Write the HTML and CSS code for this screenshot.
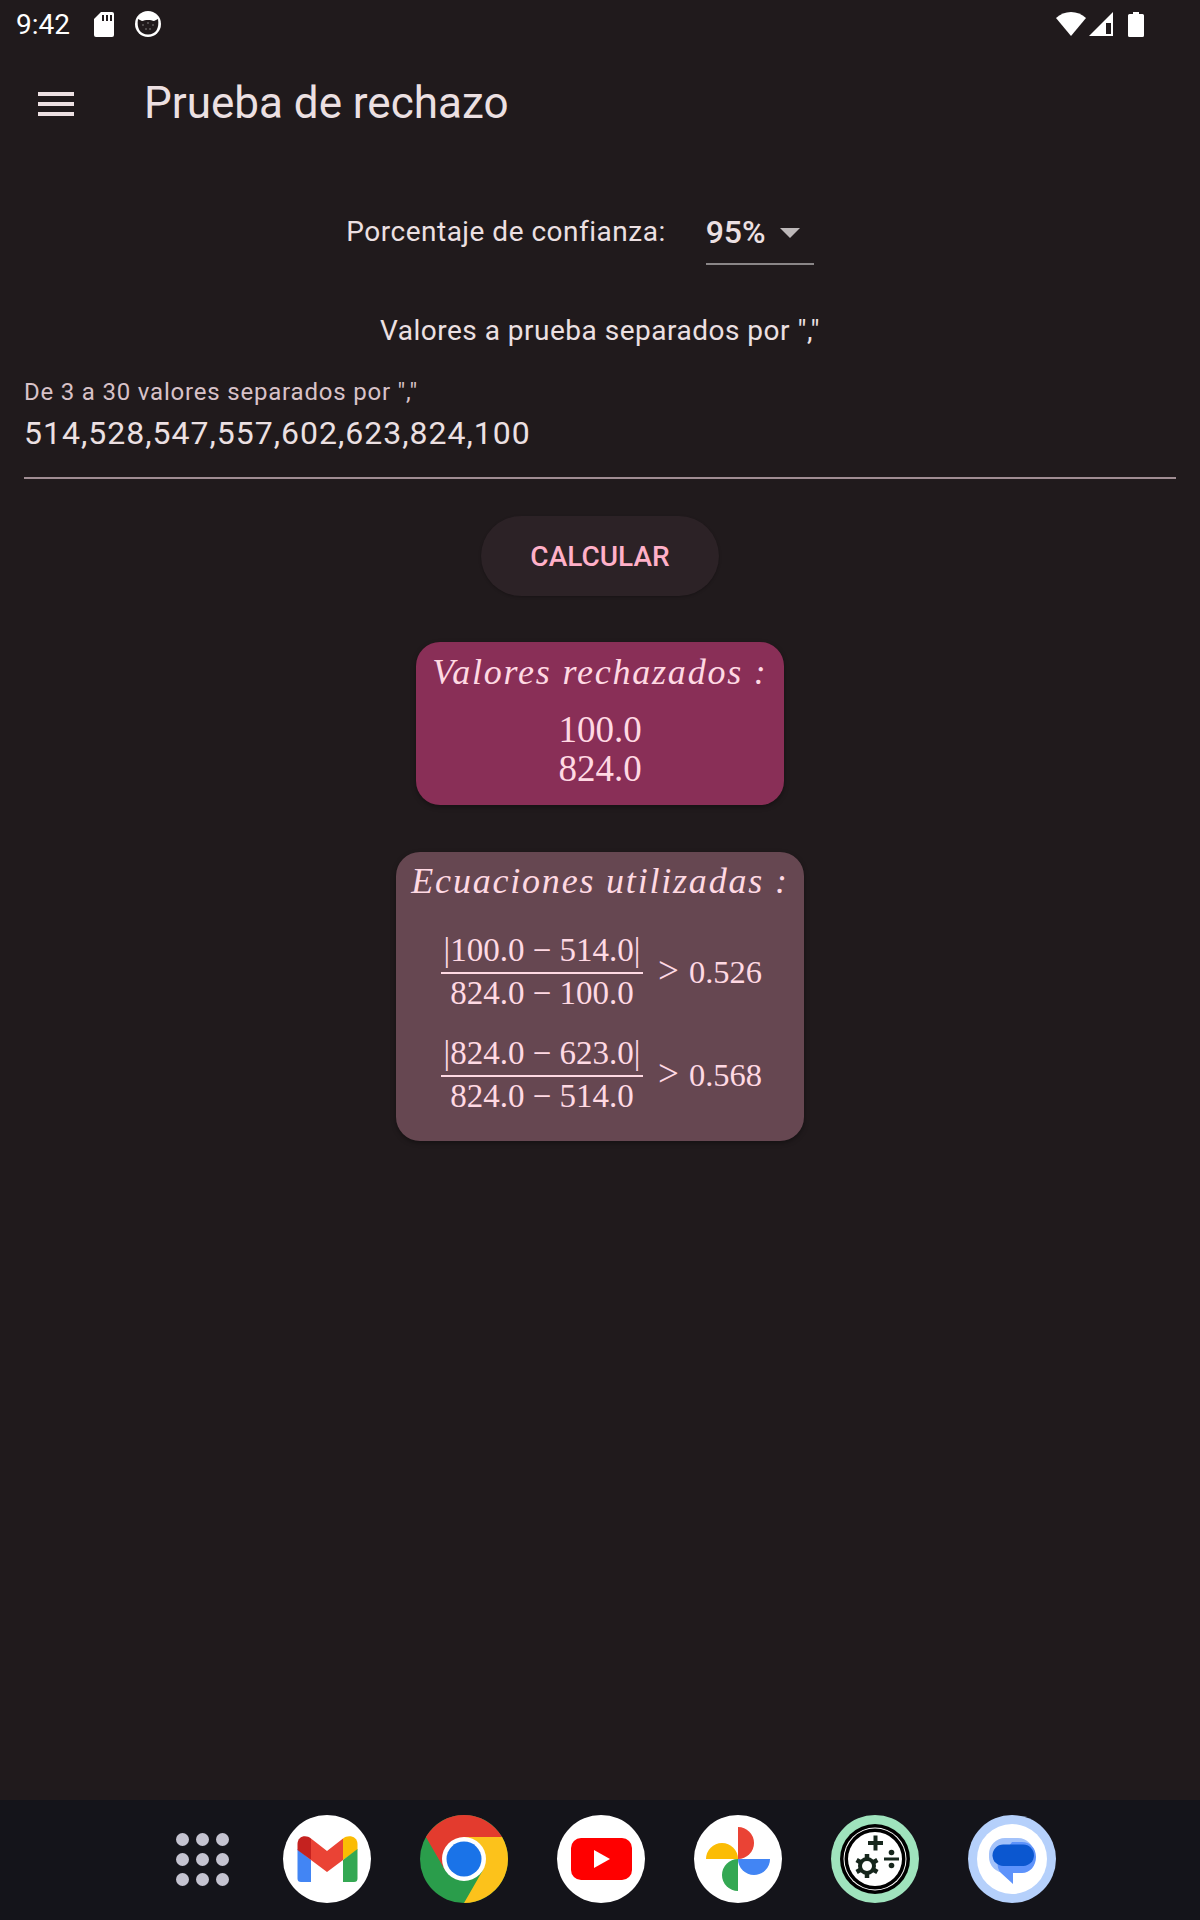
FILE: index.html
```html
<!DOCTYPE html>
<html lang="es">
<head>
  <meta charset="UTF-8" />
  <title>Prueba de rechazo</title>
  <link rel="stylesheet" href="styles.css">
</head>
<body>

  <div class="status-bar">
    <span class="clock">9:42</span>
    <svg class="sd-icon" viewBox="0 0 20 25">
      <path d="M7 0H18a2 2 0 0 1 2 2V23a2 2 0 0 1-2 2H2a2 2 0 0 1-2-2V7z" fill="#fff"/>
      <path d="M8 3h2v6H8zM12 3h2v6h-2zM16 3h2v6h-2z" fill="#201a1c"/>
    </svg>
    <svg class="cat-icon" viewBox="0 0 26 26">
      <circle cx="13" cy="13" r="13" fill="#fff"/>
      <path d="M3 8L7 10C10 8.500 16 8.500 19 10L23 8C24.500 17 21 23.500 13 23.500C5 23.500 1.500 17 3 8z" fill="#201a1c"/>
      <circle cx="8" cy="14" r="0.800" fill="#8a8a8a"/>
      <circle cx="18" cy="14" r="0.800" fill="#8a8a8a"/>
      <circle cx="13" cy="12" r="0.800" fill="#8a8a8a"/>
      <circle cx="11" cy="18" r="0.800" fill="#8a8a8a"/>
      <circle cx="15" cy="18" r="0.800" fill="#8a8a8a"/>
    </svg>
    <div class="status-right">
      <svg class="wifi-icon" viewBox="0 0 30 24">
        <path d="M0 6C8-2 22-2 30 6L15 24z" fill="#fff"/>
      </svg>
      <svg class="signal-icon" viewBox="0 0 24 24">
        <path d="M0 24L24 0V24z" fill="#fff"/>
        <path d="M17 11h5v11h-5z" fill="#201a1c"/>
      </svg>
      <svg class="battery-icon" viewBox="0 0 16 25">
        <path d="M5 0h6v2h3.500a1.500 1.500 0 0 1 1.500 1.500V23.500a1.500 1.500 0 0 1-1.500 1.500H1.500A1.500 1.500 0 0 1 0 23.500V3.500A1.500 1.500 0 0 1 1.500 2H5z" fill="#fff"/>
      </svg>
    </div>
  </div>

  <header class="app-bar">
    <div class="menu-icon">
      <span></span>
      <span></span>
      <span></span>
    </div>
    <h1>Prueba de rechazo</h1>
  </header>

  <main class="content">
    <div class="confidence-row">
      <span class="confidence-label">Porcentaje de confianza:</span>
      <div class="dropdown">
        <span>95%</span>
        <i class="dropdown-arrow"></i>
      </div>
    </div>

    <p class="values-title">Valores a prueba separados por ","</p>

    <div class="field">
      <label>De 3 a 30 valores separados por ","</label>
      <div class="field-value">514,528,547,557,602,623,824,100</div>
    </div>

    <button class="calc-button">CALCULAR</button>

    <section class="card card-rejected">
      <div class="math-title">Valores rechazados :</div>
      <div class="math-value first">100.0</div>
      <div class="math-value">824.0</div>
    </section>

    <section class="card card-equations">
      <div class="math-title">Ecuaciones utilizadas :</div>
      <div class="equation">
        <div class="fraction">
          <span class="numerator">|100.0 − 514.0|</span>
          <span class="denominator">824.0 − 100.0</span>
        </div>
        <span class="result"><span class="gt">&gt;</span>0.526</span>
      </div>
      <div class="equation">
        <div class="fraction">
          <span class="numerator">|824.0 − 623.0|</span>
          <span class="denominator">824.0 − 514.0</span>
        </div>
        <span class="result"><span class="gt">&gt;</span>0.568</span>
      </div>
    </section>
  </main>

  <footer class="dock">
    <div class="all-apps">
      <span></span><span></span><span></span>
      <span></span><span></span><span></span>
      <span></span><span></span><span></span>
    </div>

    <svg class="app-icon" viewBox="0 0 88 88">
      <circle cx="44" cy="44" r="44" fill="#fff"/>
      <path d="M14.500 34L28 45V67H18a3.500 3.500 0 0 1-3.500-3.500z" fill="#4285f4"/>
      <path d="M14.500 35V29C14.500 21 23 19 28 23.500V45z" fill="#c5221f"/>
      <path d="M28 23.500L44 36L60 23.500V45L44 57L28 45z" fill="#ea4335"/>
      <path d="M60 23.500C65 19 74.500 21 74.500 29V35L60 45z" fill="#fbbc04"/>
      <path d="M60 45L74.500 34V63.500A3.500 3.500 0 0 1 71 67H60z" fill="#34a853"/>
    </svg>

    <svg class="app-icon" viewBox="0 0 88 88">
      <circle cx="44" cy="44" r="44" fill="#2a9d4b"/>
      <path d="M5.900 22A44 44 0 0 1 82.100 22H44V44L25 55z" fill="#e33b2e"/>
      <path d="M82.100 22A44 44 0 0 1 44 88L63 55L44 44V22z" fill="#fcc21b"/>
      <circle cx="44" cy="44" r="22" fill="#fff"/>
      <circle cx="44" cy="44" r="17.500" fill="#1a73e8"/>
    </svg>

    <svg class="app-icon" viewBox="0 0 88 88">
      <circle cx="44" cy="44" r="44" fill="#fff"/>
      <rect x="14" y="23" width="61" height="42" rx="10" fill="#f00"/>
      <path d="M37 35L53 44L37 53z" fill="#fff"/>
    </svg>

    <svg class="app-icon" viewBox="0 0 88 88">
      <circle cx="44" cy="44" r="44" fill="#fff"/>
      <path d="M44 44V12A16 16 0 0 1 44 44z" fill="#ea4335"/>
      <path d="M44 44H76A16 16 0 0 1 44 44z" fill="#4285f4"/>
      <path d="M44 44V76A16 16 0 0 1 44 44z" fill="#34a853"/>
      <path d="M44 44H12A16 16 0 0 1 44 44z" fill="#fbbc04"/>
    </svg>

    <svg class="app-icon" viewBox="0 0 88 88">
      <circle cx="44" cy="44" r="44" fill="#9fe3bd"/>
      <circle cx="44" cy="44" r="35" fill="#000"/>
      <circle cx="44" cy="44" r="31.500" fill="#fff"/>
      <circle cx="44" cy="44" r="30.500" fill="#000"/>
      <circle cx="44" cy="44" r="27" fill="#fff"/>
      <path d="M37 28H52M44.500 20.500V35.500" stroke="#16261c" stroke-width="4" fill="none"/>
      <path d="M53 44H68" stroke="#16261c" stroke-width="3" fill="none"/>
      <circle cx="60.500" cy="37.500" r="2.800" fill="#16261c"/>
      <circle cx="60.500" cy="50.500" r="2.800" fill="#16261c"/>
      <circle cx="36" cy="51" r="7" stroke="#16261c" stroke-width="4" fill="none"/>
      <path d="M36 39V63M25.600 45L46.400 57M25.600 57L46.400 45" stroke="#16261c" stroke-width="4.500" fill="none"/>
      <circle cx="36" cy="51" r="5" fill="#fff"/>
    </svg>

    <svg class="app-icon" viewBox="0 0 88 88">
      <circle cx="44" cy="44" r="44" fill="#b5d0fb"/>
      <circle cx="44" cy="44" r="35" fill="#fff"/>
      <rect x="21" y="23" width="45" height="35" rx="16" fill="#a3c2fa"/>
      <path d="M44 27H54C62 27 68 33 68 42C68 51 62 58 54 58H45V69L33 58C30 55 29 50 30 46z" fill="#5e93fb"/>
      <rect x="24.500" y="29.500" width="41.500" height="21.500" rx="10.700" fill="#0b57d0"/>
    </svg>
  </footer>

</body>
</html>
```

FILE: styles.css
```css
* {
  box-sizing: border-box;
}

body {
  margin: 0;
  width: 1200px;
  height: 1920px;
  display: flex;
  flex-direction: column;
  font-family: Roboto, sans-serif;
  background-color: #201a1c;
  color: #ece0e2;
  overflow: hidden;
}

/* barra de estado */
.status-bar {
  height: 48px;
  display: flex;
  align-items: center;
  padding: 0 56px 0 16px;
  color: #fff;
}

.clock {
  font-size: 28px;
  width: 78px;
}

.sd-icon {
  width: 20px;
  height: 25px;
  margin-right: 21px;
}

.cat-icon {
  width: 26px;
  height: 26px;
}

.status-right {
  margin-left: auto;
  display: flex;
  align-items: center;
}

.wifi-icon {
  width: 30px;
  height: 24px;
  margin-right: 3px;
}

.signal-icon {
  width: 24px;
  height: 24px;
  margin-right: 15px;
}

.battery-icon {
  width: 16px;
  height: 25px;
}

/* app bar */
.app-bar {
  height: 110px;
  display: flex;
  align-items: center;
  padding-left: 38px;
  margin-bottom: 2px;
}

.menu-icon {
  width: 36px;
  margin-right: 70px;
  padding-top: 2px;
}

.menu-icon span {
  display: block;
  height: 4px;
  background-color: #ece0e2;
  margin: 6px 0;
}

.app-bar h1 {
  margin: 0;
  font-size: 44px;
  font-weight: 400;
  line-height: 56px;
}

/* contenido */
.content {
  flex: 1;
  display: flex;
  flex-direction: column;
  align-items: center;
}

.confidence-row {
  display: flex;
  margin-top: 40px;
  padding-right: 40px;
  font-size: 28px;
  letter-spacing: 0.5px;
  line-height: 64px;
}

.confidence-label {
  margin-right: 40px;
}

.dropdown {
  width: 108px;
  height: 65px;
  display: flex;
  align-items: center;
  border-bottom: 2px solid #8a8687;
  font-size: 32px;
  letter-spacing: 0;
  font-weight: 500;
}

.dropdown-arrow {
  width: 0;
  height: 0;
  margin-left: 14px;
  margin-top: 2px;
  border-left: 10px solid transparent;
  border-right: 10px solid transparent;
  border-top: 10px solid #bdb8b9;
}

.values-title {
  margin: 46px 0 0;
  font-size: 28px;
  letter-spacing: 0.5px;
  line-height: 40px;
}

.field {
  width: 1152px;
  margin-top: 25px;
  padding-bottom: 22px;
  border-bottom: 2px solid #a08d93;
}

.field label {
  display: block;
  font-size: 24px;
  line-height: 32px;
  letter-spacing: 0.8px;
  color: #d8c2c8;
}

.field-value {
  margin-top: 3px;
  font-size: 32px;
  line-height: 44px;
  letter-spacing: 1px;
}

.calc-button {
  width: 238px;
  height: 80px;
  margin-top: 37px;
  border: none;
  border-radius: 40px;
  background-color: #2c2226;
  color: #ffb0c8;
  font-family: Roboto, sans-serif;
  font-size: 28px;
  font-weight: 500;
  letter-spacing: 0;
  box-shadow: 0 1px 3px rgba(0, 0, 0, 0.25);
}

/* tarjetas con las formulas */
.card {
  border-radius: 24px;
  color: #ffd9e3;
  font-family: "Liberation Serif", serif;
  text-align: center;
  box-shadow: 0 2px 5px rgba(0, 0, 0, 0.35);
}

.card-rejected {
  width: 368px;
  height: 163px;
  margin-top: 46px;
  padding-top: 10px;
  background-color: #892f57;
}

.card-equations {
  width: 408px;
  height: 289px;
  margin-top: 47px;
  padding-top: 9px;
  background-color: #664751;
}

.math-title {
  font-size: 36px;
  font-style: italic;
  line-height: 40px;
  letter-spacing: 1.8px;
}

.math-value {
  font-size: 37px;
  line-height: 39px;
}

.math-value.first {
  margin-top: 18px;
}

.equation {
  display: flex;
  align-items: center;
  margin: 27px 0 0 45px;
}

.equation + .equation {
  margin-top: 19px;
}

.fraction {
  width: 202px;
  display: flex;
  flex-direction: column;
  font-size: 33px;
}

.numerator {
  line-height: 44px;
  border-bottom: 2px solid #ffd9e3;
}

.denominator {
  line-height: 38px;
}

.result {
  margin-left: 15px;
  padding-top: 4px;
  font-size: 32.500px;
}

.gt {
  font-size: 37px;
  line-height: 30px;
  margin-right: 10px;
}

/* dock */
.dock {
  height: 120px;
  display: flex;
  align-items: center;
  padding: 0 0 2px 163px;
  background-color: #14141a;
}

.all-apps {
  width: 88px;
  padding: 0 13px;
  display: grid;
  grid-template-columns: repeat(3, 13px);
  gap: 7px;
  margin-right: -17px;
}

.all-apps span {
  width: 13px;
  height: 13px;
  border-radius: 50%;
  background-color: #c4c3d0;
}

.app-icon {
  width: 88px;
  height: 88px;
  margin-left: 49px;
}
```
